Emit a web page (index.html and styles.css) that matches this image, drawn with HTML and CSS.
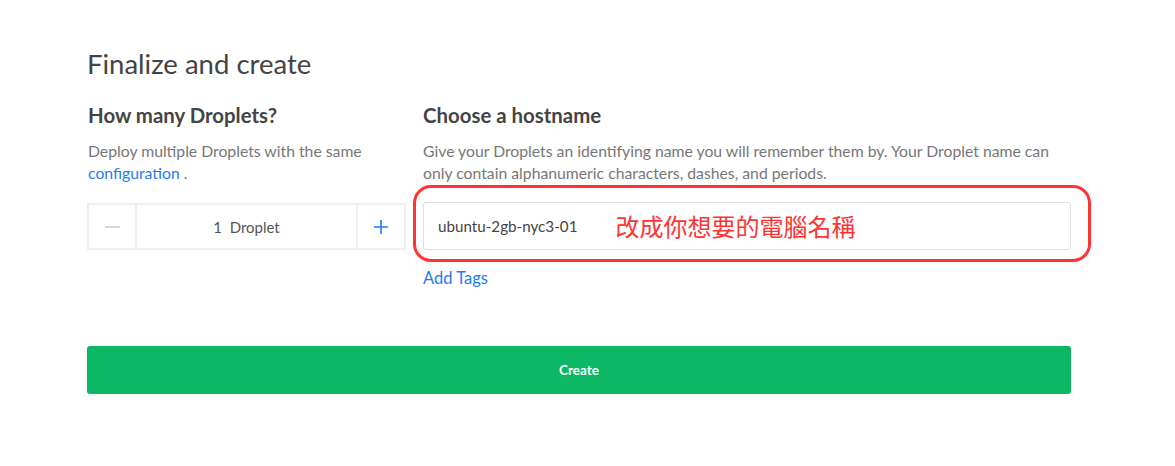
FILE: index.html
```html
<!DOCTYPE html>
<html>
<head>
<meta charset="utf-8">
<link rel="stylesheet" href="styles.css">
</head>
<body>
<div class="page">
  <h1 class="title">Finalize and create</h1>
  <div class="cols">
    <section class="col-left">
      <h2 class="heading">How many Droplets?</h2>
      <p class="desc">Deploy multiple Droplets with the same <a class="link">configuration</a> .</p>
      <div class="stepper">
        <div class="step-btn minus"><span class="minus-bar"></span></div>
        <div class="step-value">1&nbsp; Droplet</div>
        <div class="step-btn plus">
          <svg width="16" height="16" viewBox="0 0 16 16"><path d="M8 1v14M1 8h14" stroke="#1f7bf3" stroke-width="1.6" fill="none"/></svg>
        </div>
      </div>
    </section>
    <section class="col-right">
      <h2 class="heading">Choose a hostname</h2>
      <p class="desc">Give your Droplets an identifying name you will remember them by. Your Droplet name can only contain alphanumeric characters, dashes, and periods.</p>
      <div class="host-wrap">
        <div class="host-input">
          <span class="host-value">ubuntu-2gb-nyc3-01</span>
          <span class="note">改成你想要的電腦名稱</span>
        </div>
        <div class="annot"></div>
      </div>
      <a class="link tags">Add Tags</a>
    </section>
  </div>
  <button class="create">Create</button>
</div>
</body>
</html>
```
FILE: styles.css
```css
html, body {
  margin: 0;
  padding: 0;
  background: #fff;
}
body {
  font-family: "Lato", "Noto Sans", sans-serif;
  color: #444;
}
.page {
  width: 984px;
  padding: 47px 0 0 87px;
}
.title {
  margin: 0;
  font-size: 27.5px;
  font-weight: 400;
  line-height: 34px;
  color: #444;
}
.cols {
  display: flex;
  gap: 16px;
  margin-top: 21px;
}
.col-left {
  width: 319px;
  padding-left: 1px;
}
.col-right {
  flex: 1;
}
.heading {
  margin: 0;
  font-size: 20.4px;
  font-weight: 700;
  line-height: 26px;
  color: #444;
}
.desc {
  margin: 12px 0 0;
  font-size: 15.75px;
  line-height: 22px;
  color: #777;
}
.link {
  color: #1f7bf3;
  text-decoration: none;
}
.stepper {
  margin-top: 19px;
  display: flex;
  height: 47px;
  border: 2px solid #eee;
  box-sizing: border-box;
  width: 319px;
  margin-left: -1px;
}
.step-btn {
  width: 46px;
  display: flex;
  align-items: center;
  justify-content: center;
}
.minus { border-right: 2px solid #eee; }
.plus { border-left: 2px solid #eee; }
.minus-bar {
  width: 15px;
  height: 2px;
  background: #d6d6d6;
}
.step-value {
  flex: 1;
  display: flex;
  align-items: center;
  justify-content: center;
  font-size: 15px;
  color: #555;
}
.host-wrap {
  position: relative;
  margin-top: 18px;
}
.host-input {
  height: 48px;
  border: 1px solid #ddd;
  border-radius: 3px;
  box-sizing: border-box;
  display: flex;
  align-items: center;
  padding-left: 14px;
}
.host-value {
  font-size: 15.2px;
  color: #444;
}
.note {
  margin-left: 38px;
  font-family: "Noto Sans CJK TC", sans-serif;
  font-size: 24px;
  color: #ff3333;
  line-height: 1;
}
.annot {
  position: absolute;
  left: -10px;
  right: -20px;
  top: -17px;
  bottom: -12px;
  border: 3.5px solid #ff3333;
  border-radius: 18px;
  pointer-events: none;
}
.tags {
  display: inline-block;
  margin-top: 18px;
  font-size: 16.5px;
}
.create {
  display: block;
  margin-top: 58px;
  width: 984px;
  height: 48px;
  border: none;
  border-radius: 3px;
  background: #0db865;
  color: #fff;
  font-family: "Lato", "Noto Sans", sans-serif;
  font-size: 13.5px;
  font-weight: 700;
}
```
